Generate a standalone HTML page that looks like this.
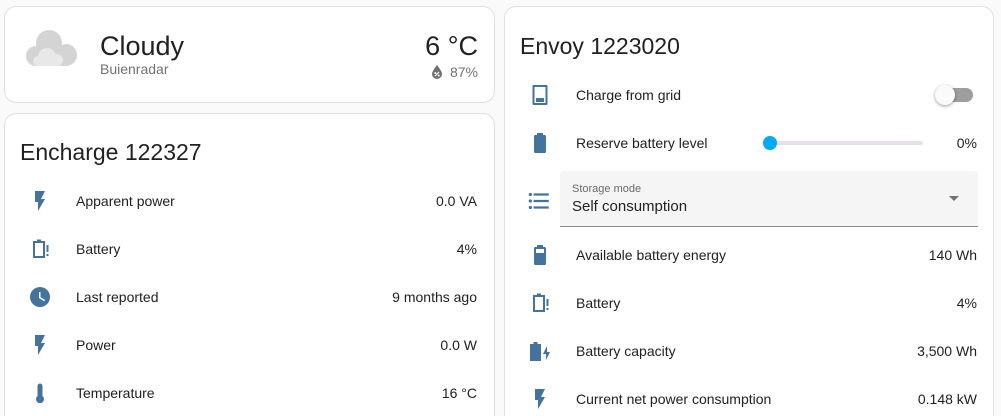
<!DOCTYPE html>
<html style="overflow:hidden"><head><style>
*{box-sizing:border-box;margin:0;padding:0}
html,body{width:1001px;height:416px;overflow:hidden}
body{background:#fafafa;font-family:"Liberation Sans",sans-serif;color:#212121;position:relative}
.card{position:absolute;background:#fff;border:1px solid #e0e0e0;border-radius:12px}
.t{position:absolute;font-size:14px;line-height:16px;white-space:nowrap}
.r{text-align:right}
svg.i{position:absolute;width:24px;height:24px;fill:#44739e}
</style></head><body>
<div class="card" style="left:4px;top:6px;width:491px;height:97px"></div>
<div class="card" style="left:4px;top:113px;width:491px;height:310px;border-bottom:none;border-radius:12px 12px 0 0"></div>
<div class="card" style="left:504px;top:6px;width:490px;height:420px;border-bottom:none;border-radius:12px 12px 0 0"></div>

<!-- weather -->
<svg style="position:absolute;left:24px;top:28px;width:56px;height:42px" viewBox="0 0 56 42"><circle cx="25" cy="15" r="13" fill="#d4d4d4"/><circle cx="42" cy="27" r="11" fill="#d4d4d4"/><circle cx="12" cy="28" r="10" fill="#d4d4d4"/><rect x="12" y="24" width="30" height="14" fill="#d4d4d4"/><circle cx="23" cy="29" r="9" fill="#e8e8e8"/><circle cx="33" cy="32" r="6" fill="#e8e8e8"/><circle cx="14" cy="33" r="5" fill="#e8e8e8"/><rect x="14" y="32" width="22" height="6" fill="#e8e8e8"/></svg>
<div class="t" style="left:100px;top:30px;font-size:27px;line-height:32px">Cloudy</div>
<div class="t" style="left:100px;top:61px;color:#727272">Buienradar</div>
<div class="t r" style="right:523px;top:30px;font-size:27px;line-height:32px">6 °C</div>
<svg style="position:absolute;left:431px;top:65px;width:12px;height:14px" viewBox="0 0 12 14"><path d="M6 0C6 0 1 6 1 9a5 5 0 0 0 10 0C11 6 6 0 6 0Z" fill="#727272"/><path d="M4 11L8 7" stroke="#fff" stroke-width="1.2"/><circle cx="4.3" cy="8" r="1" fill="#fff"/><circle cx="7.7" cy="10.5" r="1" fill="#fff"/></svg>
<div class="t r" style="right:523px;top:64px;color:#727272">87%</div>

<!-- encharge -->
<div class="t" style="left:20px;top:138px;font-size:23px;line-height:28px">Encharge 122327</div>

<svg class="i" style="left:28px;top:189px" viewBox="0 0 24 24"><path d="M7,2V13H10V22L17,10H13L17,2H7Z"/></svg>
<div class="t" style="left:76px;top:193px">Apparent power</div><div class="t r" style="right:524px;top:193px">0.0 VA</div>

<svg class="i" style="left:28px;top:237px" viewBox="0 0 24 24"><path d="M5 4h4V2.5h4V4h4v17H5ZM7 6v13h8V6Z"/><rect x="18.5" y="8" width="2" height="7"/><rect x="18.5" y="17" width="2" height="2"/></svg>
<div class="t" style="left:76px;top:241px">Battery</div><div class="t r" style="right:524px;top:241px">4%</div>

<svg class="i" style="left:28px;top:285px" viewBox="0 0 24 24"><path d="M12,2A10,10 0 0,0 2,12A10,10 0 0,0 12,22A10,10 0 0,0 22,12A10,10 0 0,0 12,2M16.2,16.2L11,13V7H12.5V12.2L17,14.9L16.2,16.2Z"/></svg>
<div class="t" style="left:76px;top:289px">Last reported</div><div class="t r" style="right:524px;top:289px">9 months ago</div>

<svg class="i" style="left:28px;top:333px" viewBox="0 0 24 24"><path d="M7,2V13H10V22L17,10H13L17,2H7Z"/></svg>
<div class="t" style="left:76px;top:337px">Power</div><div class="t r" style="right:524px;top:337px">0.0 W</div>

<svg class="i" style="left:28px;top:381px" viewBox="0 0 24 24"><path d="M14.5 15V5a2.5 2.5 0 0 0-5 0v10a4 4 0 1 0 5 0Z"/></svg>
<div class="t" style="left:76px;top:385px">Temperature</div><div class="t r" style="right:524px;top:385px">16 °C</div>

<!-- envoy -->
<div class="t" style="left:520px;top:32px;font-size:23px;line-height:28px">Envoy 1223020</div>

<svg class="i" style="left:528px;top:83px" viewBox="0 0 24 24"><path d="M5.5 2h13a1 1 0 0 1 1 1v18a1 1 0 0 1-1 1h-13a1 1 0 0 1-1-1V3a1 1 0 0 1 1-1Zm1 2v16h11V4Z"/><rect x="8" y="15" width="8" height="4"/></svg>
<div class="t" style="left:576px;top:87px">Charge from grid</div>
<div style="position:absolute;left:940px;top:88px;width:33px;height:14px;border-radius:7px;background:#9e9e9e"></div>
<div style="position:absolute;left:935px;top:85px;width:20px;height:20px;border-radius:50%;background:#fafafa;box-shadow:0 1px 3px rgba(0,0,0,.4)"></div>

<svg class="i" style="left:528px;top:131px" viewBox="0 0 24 24"><path d="M16.67,4H15V2H9V4H7.33A1.33,1.33 0 0,0 6,5.33V20.67C6,21.4 6.6,22 7.33,22H16.67A1.33,1.33 0 0,0 18,20.67V5.33C18,4.6 17.4,4 16.67,4Z"/></svg>
<div class="t" style="left:576px;top:135px">Reserve battery level</div>
<div style="position:absolute;left:770px;top:141px;width:153px;height:4px;border-radius:2px;background:#e4e1e8"></div>
<div style="position:absolute;left:763px;top:136px;width:14px;height:14px;border-radius:50%;background:#03a9f4"></div>
<div class="t r" style="right:24px;top:135px">0%</div>

<svg class="i" style="left:526px;top:188px;width:26px;height:26px" viewBox="0 0 24 24"><path d="M7,5H21V7H7V5M7,13V11H21V13H7M4,4.5A1.5,1.5 0 0,1 5.5,6A1.5,1.5 0 0,1 4,7.5A1.5,1.5 0 0,1 2.5,6A1.5,1.5 0 0,1 4,4.5M4,10.5A1.5,1.5 0 0,1 5.5,12A1.5,1.5 0 0,1 4,13.5A1.5,1.5 0 0,1 2.5,12A1.5,1.5 0 0,1 4,10.5M7,19V17H21V19H7M4,16.5A1.5,1.5 0 0,1 5.5,18A1.5,1.5 0 0,1 4,19.5A1.5,1.5 0 0,1 2.5,18A1.5,1.5 0 0,1 4,16.5Z"/></svg>
<div style="position:absolute;left:560px;top:171px;width:418px;height:56px;background:#f5f5f5;border-radius:4px 4px 0 0;border-bottom:1px solid #8a8a8a"></div>
<div class="t" style="left:572px;top:183px;font-size:11px;line-height:13px;color:#6b6b6b">Storage mode</div>
<div class="t" style="left:572px;top:198px;font-size:15px;line-height:17px">Self consumption</div>
<div style="position:absolute;left:949px;top:196px;width:0;height:0;border-left:5px solid transparent;border-right:5px solid transparent;border-top:5px solid #737373"></div>

<svg class="i" style="left:528px;top:243px" viewBox="0 0 24 24"><path d="M16.67,4H15V2H9V4H7.33A1.33,1.33 0 0,0 6,5.33V20.67C6,21.4 6.6,22 7.33,22H16.67A1.33,1.33 0 0,0 18,20.67V5.33C18,4.6 17.4,4 16.67,4ZM16 6H8v4h8Z" fill-rule="evenodd"/></svg>
<div class="t" style="left:576px;top:247px">Available battery energy</div><div class="t r" style="right:24px;top:247px">140 Wh</div>

<svg class="i" style="left:528px;top:291px" viewBox="0 0 24 24"><path d="M5 4h4V2.5h4V4h4v17H5ZM7 6v13h8V6Z"/><rect x="18.5" y="8" width="2" height="7"/><rect x="18.5" y="17" width="2" height="2"/></svg>
<div class="t" style="left:576px;top:295px">Battery</div><div class="t r" style="right:24px;top:295px">4%</div>

<svg class="i" style="left:528px;top:339px" viewBox="0 0 24 24"><path d="M2 5h3.5V3h4v2H13v17H2Z"/><path d="M19 7l-4 8h3v6l4-8h-3Z"/></svg>
<div class="t" style="left:576px;top:343px">Battery capacity</div><div class="t r" style="right:24px;top:343px">3,500 Wh</div>

<svg class="i" style="left:528px;top:387px" viewBox="0 0 24 24"><path d="M7,2V13H10V22L17,10H13L17,2H7Z"/></svg>
<div class="t" style="left:576px;top:391px">Current net power consumption</div><div class="t r" style="right:24px;top:391px">0.148 kW</div>
</body></html>
